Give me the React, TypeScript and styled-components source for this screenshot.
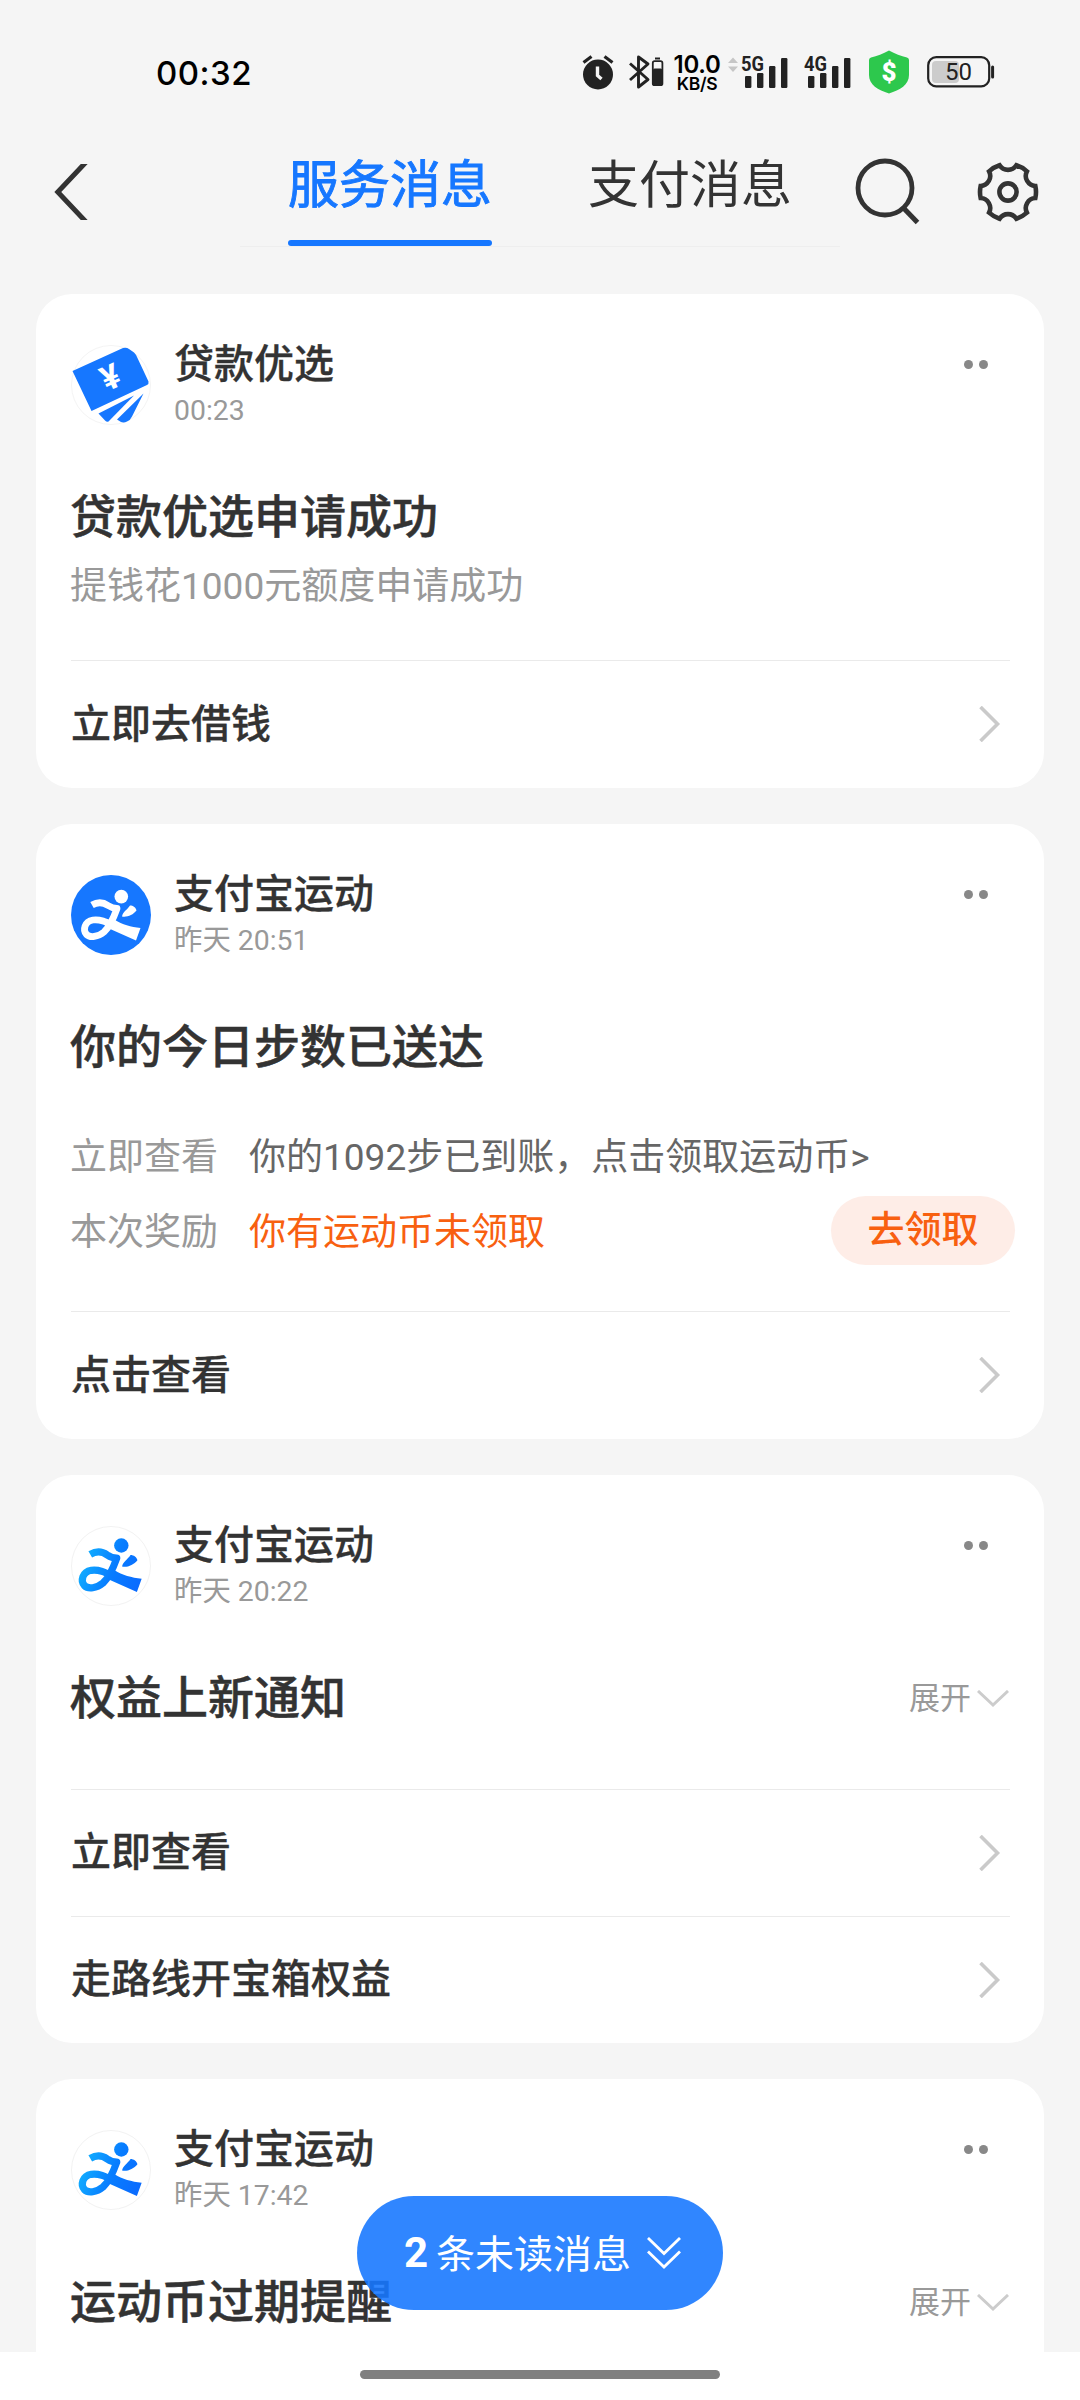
import React from "react";
import styled, { createGlobalStyle } from "styled-components";

const GlobalStyle = createGlobalStyle`
  * { box-sizing: border-box; }
  body {
    margin: 0;
    background: #f5f5f5;
    font-family: Roboto, "Noto Sans CJK SC", sans-serif;
    color: #333333;
  }
`;

const Screen = styled.div`
  position: relative;
  display: flex;
  flex-direction: column;
  width: 1080px;
  height: 2400px;
  overflow: hidden;
  background: #f5f5f5;
`;

/* ---------- status bar ---------- */

const StatusBar = styled.header`
  display: flex;
  align-items: center;
  justify-content: space-between;
  height: 144px;
  padding: 0 85px 0 156px;
  font-family: Inter, sans-serif;
  color: #000000;
`;

const Clock = styled.time`
  padding-top: 2px;
  font-size: 33px;
  font-weight: 500;
  line-height: 40px;
  letter-spacing: 0.5px;
`;

const StatusIcons = styled.div`
  display: flex;
  align-items: center;
`;

const Slot = styled.div<{ $gap?: number }>`
  display: flex;
  margin-left: ${(p) => p.$gap ?? 0}px;
`;

const Speed = styled.div`
  display: flex;
  flex-direction: column;
  align-items: center;
  width: 48px;
  margin-left: 9px;
  margin-right: 1px;
  padding-top: 3px;
`;

const SpeedValue = styled.span`
  font-size: 24px;
  font-weight: 600;
  line-height: 21px;
  letter-spacing: -0.3px;
`;

const SpeedUnit = styled.span`
  font-size: 17.5px;
  font-weight: 600;
  line-height: 18px;
  letter-spacing: -0.3px;
`;

/* ---------- navigation ---------- */

const NavBar = styled.nav`
  display: flex;
  align-items: flex-start;
  height: 150px;
`;

const NavButton = styled.button<{ $top: number; $left: number }>`
  display: flex;
  margin: ${(p) => p.$top}px 0 0 ${(p) => p.$left}px;
  padding: 0;
  border: 0;
  background: none;
`;

const Tabs = styled.div`
  display: flex;
  justify-content: space-between;
  width: 600px;
  height: 103px;
  margin-left: 152px;
  padding: 0 48px;
  border-bottom: 1px solid #eeeeee;
`;

const Tab = styled.div<{ $active?: boolean }>`
  display: flex;
  flex-direction: column;
  justify-content: space-between;
  width: 204px;
  height: 102px;
  padding-top: 9px;
  font-size: 51px;
  line-height: 66px;
  white-space: nowrap;
  color: ${(p) => (p.$active ? "#1677ff" : "#333333")};
  -webkit-text-stroke: ${(p) => (p.$active ? "0.9px #1677ff" : "0")};
`;

const TabLine = styled.span`
  height: 6px;
  border-radius: 3px;
  background: #1677ff;
`;

/* ---------- cards ---------- */

const Feed = styled.main`
  display: flex;
  flex: 1;
  flex-direction: column;
  gap: 36px;
  min-height: 0;
  padding: 0 36px;
  overflow: hidden;
`;

const Card = styled.article`
  display: flex;
  flex-direction: column;
  flex-shrink: 0;
  padding: 0 34px 0 35px;
  border-radius: 36px;
  background: #ffffff;

  &:last-child {
    flex: 1;
    border-radius: 36px 36px 0 0;
  }
`;

const CardHead = styled.div`
  display: flex;
  height: 131px;
  padding-top: 51px;
`;

const Who = styled.div`
  display: flex;
  flex: 1;
  flex-direction: column;
  margin: -8px 0 0 23px;
`;

const Name = styled.span`
  font-size: 40px;
  font-weight: 500;
  line-height: 56px;
  -webkit-text-stroke: 0.3px currentColor;
`;

const When = styled.span`
  padding-top: 1px;
  font-size: 28.4px;
  line-height: 34px;
  color: #999999;
`;

const More = styled.div`
  display: flex;
  gap: 6px;
  margin: 15px 22px 0 0;
`;

const Dot = styled.span`
  width: 9px;
  height: 9px;
  border-radius: 50%;
  background: #888888;
`;

const TitleRow = styled.div`
  display: flex;
  align-items: center;
  justify-content: space-between;
  margin-top: 62px;
`;

const Title = styled.h2`
  margin: 0 0 0 -1px;
  font-size: 46px;
  font-weight: 500;
  line-height: 60px;
  -webkit-text-stroke: 0.5px currentColor;
`;

const Expand = styled.span`
  display: flex;
  align-items: center;
  gap: 6px;
  padding: 2px 1px 0 0;
  font-size: 31px;
  line-height: 40px;
  color: #999999;
`;

const Description = styled.p`
  margin: 15px 0 0 -1px;
  font-size: 37px;
  line-height: 50px;
  color: #999999;
`;

const Details = styled.div`
  display: flex;
  flex-direction: column;
  gap: 15px;
  margin: 54px -5px 0 -1px;
`;

const Detail = styled.div<{ $tall?: boolean }>`
  display: flex;
  align-items: center;
  height: ${(p) => (p.$tall ? 69 : 50)}px;
  font-size: 37px;
  line-height: 50px;
`;

const Label = styled.span`
  width: 179px;
  padding-top: 4px;
  color: #999999;
`;

const Value = styled.span<{ $accent?: boolean }>`
  flex: 1;
  padding-top: 4px;
  color: ${(p) => (p.$accent ? "#f86010" : "#666666")};
`;

const Claim = styled.button`
  display: flex;
  align-items: center;
  justify-content: center;
  width: 184px;
  height: 69px;
  padding: 0;
  border: 0;
  border-radius: 35px;
  background: #feede7;
  color: #f86010;
  font: 500 37px/50px Roboto, "Noto Sans CJK SC", sans-serif;
`;

const Actions = styled.div<{ $space: number }>`
  display: flex;
  flex-direction: column;
  margin-top: ${(p) => p.$space}px;
`;

const Action = styled.div<{ $height: number }>`
  display: flex;
  align-items: center;
  justify-content: space-between;
  height: ${(p) => p.$height}px;
  padding: 0 9px 1px 0;
  border-top: 1px solid #eaeaea;
  font-size: 40px;
  font-weight: 500;
  line-height: 56px;
`;

const ActionText = styled.span`
  padding-top: 1px;
  -webkit-text-stroke: 0.3px currentColor;
`;

/* ---------- overlay and system bar ---------- */

const Unread = styled.button`
  position: absolute;
  left: 357px;
  top: 2196px;
  display: flex;
  align-items: center;
  width: 366px;
  height: 114px;
  padding: 0 0 0 47px;
  border: 0;
  border-radius: 57px;
  background: rgba(22, 119, 255, 0.89);
  color: #ffffff;
  font: 400 39px/56px Roboto, "Noto Sans CJK SC", sans-serif;
`;

const Count = styled.b`
  width: 32px;
  text-align: left;
  font-size: 42px;
  font-weight: 700;
`;

const UnreadText = styled.span`
  width: 211px;
  padding-top: 3px;
  text-align: left;
  white-space: nowrap;
`;

const SystemBar = styled.footer`
  display: flex;
  justify-content: center;
  height: 48px;
  padding-top: 18px;
  background: #ffffff;
`;

const HomeHandle = styled.span`
  width: 360px;
  height: 9px;
  border-radius: 5px;
  background: #808080;
`;

/* ---------- drawings ---------- */

const AlarmIcon = () => (
  <svg width="32" height="36" viewBox="0 0 32 36">
    <circle cx="16" cy="20.5" r="15" fill="#222" />
    <path d="M1.5 8.5 L9.5 2.5 M30.5 8.5 L22.5 2.5" stroke="#222" strokeWidth="3.2" />
    <path d="M15.5 12.5 V21.5 L19.5 25" fill="none" stroke="#f5f5f5" strokeWidth="3.4" />
  </svg>
);

const BluetoothIcon = () => (
  <svg width="36" height="36" viewBox="0 0 36 36">
    <path d="M2 9.5 L20 25.5 L10.5 33 V3 L20 10 L2 26" fill="none" stroke="#222" strokeWidth="2.9" strokeLinejoin="round" />
    <path d="M27 4.5 H32" stroke="#222" strokeWidth="2" />
    <rect x="24.8" y="7.2" width="9.6" height="24" rx="1.8" fill="#f5f5f5" stroke="#222" strokeWidth="1.8" />
    <rect x="25" y="14.5" width="9.2" height="17" rx="1.5" fill="#222" />
  </svg>
);

const SignalIcon = ({ kind, arrows }: { kind: string; arrows?: boolean }) => (
  <svg width="62" height="36" viewBox="0 0 62 36">
    {arrows && <path d="M1 9 L6 3.5 L11 9 Z M1 12.5 H11 L6 18 Z" fill="#c6c6c6" />}
    <text x="14" y="17" fontFamily="Roboto" fontWeight="700" fontSize="21" textLength="23" lengthAdjust="spacingAndGlyphs" fill="#222">
      {kind}
    </text>
    <rect x="18" y="22" width="6.4" height="12" rx="1.2" fill="#222" />
    <rect x="30" y="19" width="6.4" height="15" rx="1.2" fill="#222" />
    <rect x="42" y="12" width="6.4" height="22" rx="1.2" fill="#222" />
    <rect x="54" y="4" width="6.4" height="30" rx="1.2" fill="#222" />
  </svg>
);

const ShieldIcon = () => (
  <svg width="40" height="44" viewBox="0 0 40 44">
    <path d="M20 0.5 C26 4 32 6 38 7.5 Q40 8 40 10 V25 C40 35 31 40 20 43.5 C9 40 0 35 0 25 V10 Q0 8 2 7.5 C8 6 14 4 20 0.5 Z" fill="#2dc84d" />
    <text x="20" y="31" textAnchor="middle" fontFamily="Roboto" fontWeight="900" fontSize="26" fill="#fff">$</text>
  </svg>
);

const BatteryIcon = () => (
  <svg width="68" height="32" viewBox="0 0 68 32">
    <rect x="5" y="5" width="27" height="22" rx="4" fill="#cccccc" />
    <rect x="1.2" y="1.2" width="61" height="29.2" rx="8" fill="none" stroke="#222" strokeWidth="2.2" />
    <path d="M65.6 11 V21" stroke="#222" strokeWidth="3" strokeLinecap="round" />
    <text x="31.5" y="24" textAnchor="middle" fontFamily="Roboto" fontSize="24" fill="#222">50</text>
  </svg>
);

const BackIcon = () => (
  <svg width="34" height="56" viewBox="0 0 34 56">
    <path d="M34 -4 L3.8 28 L34 60" fill="none" stroke="#333" strokeWidth="5" />
  </svg>
);

const SearchIcon = () => (
  <svg width="66" height="68" viewBox="0 0 66 68">
    <circle cx="30" cy="30" r="27" fill="none" stroke="#333" strokeWidth="4.8" />
    <path d="M48.5 50 L62.5 64.5" stroke="#333" strokeWidth="5" />
  </svg>
);

const gearPath = (() => {
  const at = (deg: number) => {
    const a = ((deg - 90) * Math.PI) / 180;
    return `${(31 + 28 * Math.cos(a)).toFixed(2)} ${(31 + 28 * Math.sin(a)).toFixed(2)}`;
  };
  let d = `M${at(-17.5)}`;
  for (let k = 0; k < 6; k += 1) {
    d += ` A10 10 0 0 0 ${at(k * 60 + 17.5)} A28 28 0 0 1 ${at(k * 60 + 42.5)}`;
  }
  return `${d} Z`;
})();

const GearIcon = () => (
  <svg width="62" height="62" viewBox="0 0 62 62">
    <path d={gearPath} fill="none" stroke="#333" strokeWidth="4.6" />
    <circle cx="31" cy="31" r="8.6" fill="none" stroke="#333" strokeWidth="4.6" />
  </svg>
);

const ChevronRight = () => (
  <svg width="22" height="36" viewBox="0 0 22 36">
    <path d="M1.5 1 L18.5 18 L1.5 35" fill="none" stroke="#cacaca" strokeWidth="3.6" />
  </svg>
);

const ChevronDown = () => (
  <svg width="32" height="18" viewBox="0 0 32 18">
    <path d="M1 1 L16 15 L31 1" fill="none" stroke="#cccccc" strokeWidth="3" />
  </svg>
);

const DoubleDown = () => (
  <svg width="34" height="32" viewBox="0 0 34 32">
    <path d="M1 1 L17 16.5 L33 1 M1 14.5 L17 30 L33 14.5" fill="none" stroke="#fff" strokeWidth="2.8" />
  </svg>
);

const LoanAvatar = () => (
  <svg width="80" height="80" viewBox="0 0 80 80">
    <circle cx="40" cy="40" r="39.5" fill="#fff" stroke="#f4f4f4" />
    <path d="M1.5 26 L52 3 Q55.5 2 58 4 L63 7.5 Q65 9.5 66 12 L77.5 36.5 Q78 39 76 40 L20.5 66 Z" fill="#1677ff" />
    <path d="M27.5 68.5 L63 50.5 L37.500 76.5 Q36 77.5 34 75.5 Z" fill="#1677ff" />
    <path d="M72.5 48.5 L46 74.5 L50 77 Q53 78 56 76.5 Q59.5 75 61 71.5 Z" fill="#1677ff" />
    <text
      x="39.5"
      y="44"
      textAnchor="middle"
      fontFamily="Roboto"
      fontWeight="700"
      fontSize="34"
      fill="#fff"
      transform="rotate(-24 39.5 32)"
    >
      ¥
    </text>
  </svg>
);

const RunnerShape = ({ color }: { color: string }) => (
  <g>
    <circle cx="50.3" cy="21.6" r="6.8" fill={color} />
    <path
      d="M21 30 C27 26.5 32 27 37 30.5 C40 32.5 43 33.5 46 33.5 C43 42 39.5 51 33 57 C27 62 19 63 15.500 59.5 C11.5 55 13.5 46.5 22 45 C30 44 36 47.5 43 51"
      fill="none"
      stroke={color}
      strokeWidth="6.8"
      strokeLinejoin="round"
    />
    <path d="M44 45 C51 49.5 60 52 69.5 53 L65 65.5 L38 53.5 Z" fill={color} />
    <path d="M51 41.5 C52 36.5 56 35 59 30.5 C62 30.5 65 32.5 65.500 35.5 C62 40 56 42.5 51 41.5 Z" fill={color} />
  </g>
);

const SportsAvatar = ({ filled }: { filled?: boolean }) => (
  <svg width="80" height="80" viewBox="0 0 80 80">
    <defs>
      <linearGradient id="runner" gradientUnits="userSpaceOnUse" x1="12" y1="30" x2="68" y2="52">
        <stop offset="0" stopColor="#12b4ff" />
        <stop offset="0.55" stopColor="#087dff" />
        <stop offset="1" stopColor="#0a6cff" />
      </linearGradient>
    </defs>
    {filled ? (
      <circle cx="40" cy="40" r="40" fill="#1677ff" />
    ) : (
      <circle cx="40" cy="40" r="39.5" fill="#fff" stroke="#f2f2f2" />
    )}
    <g transform={filled ? undefined : "translate(-3 -3.4) scale(1.06)"}>
      <RunnerShape color={filled ? "#fff" : "url(#runner)"} />
    </g>
  </svg>
);

/* ---------- page ---------- */

const Head = ({ name, when, icon }: { name: string; when: string; icon: React.ReactNode }) => (
  <CardHead>
    {icon}
    <Who>
      <Name>{name}</Name>
      <When>{when}</When>
    </Who>
    <More>
      <Dot />
      <Dot />
    </More>
  </CardHead>
);

const Heading = ({ text, expandable }: { text: string; expandable?: boolean }) => (
  <TitleRow>
    <Title>{text}</Title>
    {expandable && (
      <Expand>
        展开
        <ChevronDown />
      </Expand>
    )}
  </TitleRow>
);

const ActionRow = ({ text, height = 128 }: { text: string; height?: number }) => (
  <Action $height={height}>
    <ActionText>{text}</ActionText>
    <ChevronRight />
  </Action>
);

export default function App() {
  return (
    <>
      <GlobalStyle />
      <Screen>
        <StatusBar>
          <Clock>00:32</Clock>
          <StatusIcons>
            <Slot><AlarmIcon /></Slot>
            <Slot $gap={14}><BluetoothIcon /></Slot>
            <Speed>
              <SpeedValue>10.0</SpeedValue>
              <SpeedUnit>KB/S</SpeedUnit>
            </Speed>
            <Slot $gap={5}><SignalIcon kind="5G" arrows /></Slot>
            <Slot $gap={1}><SignalIcon kind="4G" /></Slot>
            <Slot $gap={17}><ShieldIcon /></Slot>
            <Slot $gap={18}><BatteryIcon /></Slot>
          </StatusIcons>
        </StatusBar>

        <NavBar>
          <NavButton $top={20} $left={54} aria-label="返回"><BackIcon /></NavButton>
          <Tabs>
            <Tab $active>
              服务消息
              <TabLine />
            </Tab>
            <Tab>支付消息</Tab>
          </Tabs>
          <NavButton $top={14} $left={15} aria-label="搜索"><SearchIcon /></NavButton>
          <NavButton $top={17} $left={56} aria-label="设置"><GearIcon /></NavButton>
        </NavBar>

        <Feed>
          <Card>
            <Head name="贷款优选" when="00:23" icon={<LoanAvatar />} />
            <Heading text="贷款优选申请成功" />
            <Description>提钱花1000元额度申请成功</Description>
            <Actions $space={48}>
              <ActionRow text="立即去借钱" />
            </Actions>
          </Card>

          <Card>
            <Head name="支付宝运动" when="昨天 20:51" icon={<SportsAvatar filled />} />
            <Heading text="你的今日步数已送达" />
            <Details>
              <Detail>
                <Label>立即查看</Label>
                <Value>你的1092步已到账，点击领取运动币&gt;</Value>
              </Detail>
              <Detail $tall>
                <Label>本次奖励</Label>
                <Value $accent>你有运动币未领取</Value>
                <Claim>去领取</Claim>
              </Detail>
            </Details>
            <Actions $space={46}>
              <ActionRow text="点击查看" />
            </Actions>
          </Card>

          <Card>
            <Head name="支付宝运动" when="昨天 20:22" icon={<SportsAvatar />} />
            <Heading text="权益上新通知" expandable />
            <Actions $space={61}>
              <ActionRow text="立即查看" height={127} />
              <ActionRow text="走路线开宝箱权益" height={127} />
            </Actions>
          </Card>

          <Card>
            <Head name="支付宝运动" when="昨天 17:42" icon={<SportsAvatar />} />
            <Heading text="运动币过期提醒" expandable />
          </Card>
        </Feed>

        <SystemBar>
          <HomeHandle />
        </SystemBar>

        <Unread>
          <Count>2</Count>
          <UnreadText>条未读消息</UnreadText>
          <DoubleDown />
        </Unread>
      </Screen>
    </>
  );
}
